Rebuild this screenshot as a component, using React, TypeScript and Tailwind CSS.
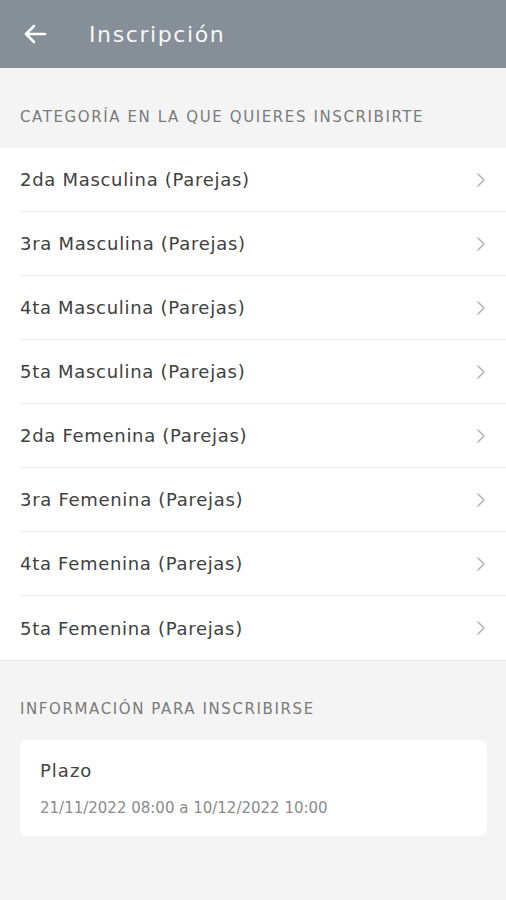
import React from "react";

const categories: string[] = [
  "2da Masculina (Parejas)",
  "3ra Masculina (Parejas)",
  "4ta Masculina (Parejas)",
  "5ta Masculina (Parejas)",
  "2da Femenina (Parejas)",
  "3ra Femenina (Parejas)",
  "4ta Femenina (Parejas)",
  "5ta Femenina (Parejas)",
];

const Chevron = () => (
  <svg width="10" height="16" viewBox="0 0 10 16" fill="none">
    <path d="M2 2l6 6-6 6" stroke="#b5b5b5" strokeWidth="1.6" strokeLinecap="round" strokeLinejoin="round" />
  </svg>
);

const App = () => {
  return (
    <div className="min-h-[900px] w-full bg-[#f4f4f4] font-['DejaVu_Sans',sans-serif]">
      <div className="h-[68px] bg-[#868e97] flex items-center">
        <div className="w-[70px] pl-[24px] flex items-center">
          <svg width="23" height="20" viewBox="0 0 23 20" fill="none">
            <path d="M21 10H3M10 2L2 10l8 8" stroke="white" strokeWidth="2.6" strokeLinecap="round" strokeLinejoin="round" />
          </svg>
        </div>
        <span className="ml-[19px] text-[#f7f7f7] text-[22px] tracking-[1.6px]">Inscripción</span>
      </div>

      <div className="px-[20px] pt-[39px] pb-[21px] text-[15px] leading-[20px] text-[#7a7a7a] tracking-[1.6px]">
        CATEGORÍA EN LA QUE QUIERES INSCRIBIRTE
      </div>

      <div className="bg-white border-b border-[#e8e8e8]">
        {categories.map((c, i) => (
          <div key={c} className="pl-[20px]">
            <div
              className={
                "h-[64px] flex items-center justify-between pr-[20px] " +
                (i < categories.length - 1 ? "border-b border-[#ededed]" : "")
              }
            >
              <span className="text-[18px] text-[#404040] tracking-[0.7px]">{c}</span>
              <Chevron />
            </div>
          </div>
        ))}
      </div>

      <div className="px-[20px] pt-[38px] pb-[21px] text-[15px] leading-[20px] text-[#7a7a7a] tracking-[1.6px]">
        INFORMACIÓN PARA INSCRIBIRSE
      </div>

      <div className="mx-[20px] w-[467px] bg-white rounded-[6px] px-[20px] pt-[19px] pb-[18px]">
        <div className="text-[18px] leading-[24px] text-[#444] tracking-[1px]">Plazo</div>
        <div className="mt-[15px] text-[15px] leading-[20px] text-[#8a8a8a]">21/11/2022 08:00 a 10/12/2022 10:00</div>
      </div>
    </div>
  );
};

export default App;
